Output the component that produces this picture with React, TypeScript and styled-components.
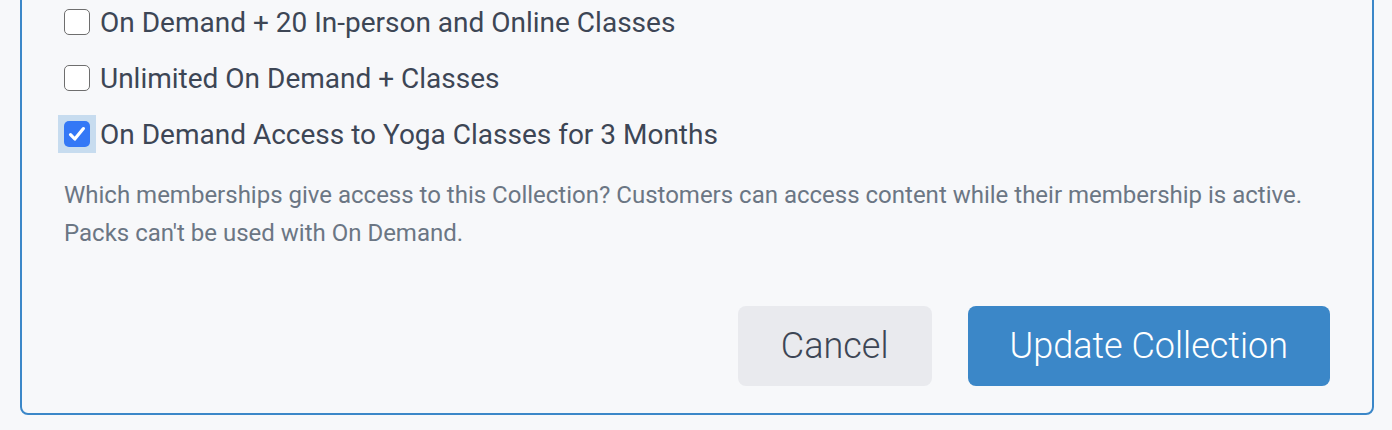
import React, { useState } from "react";
import styled, { createGlobalStyle } from "styled-components";

const GlobalStyle = createGlobalStyle`
  html, body {
    margin: 0;
    padding: 0;
    background: #f7f8fa;
    font-family: Roboto, "Liberation Sans", Arial, sans-serif;
    overflow: hidden;
  }
`;

const Page = styled.div`
  width: 1392px;
  height: 430px;
  overflow: hidden;
  background: #f7f8fa;
`;

const Card = styled.section`
  box-sizing: border-box;
  margin: -40px 0 0 20px;
  width: 1354px;
  border: 2px solid #3b87c8;
  border-radius: 8px;
  background: #f7f8fa;
  padding: 32px 42px 27px 36px;
  display: flex;
  flex-direction: column;
`;

const OptionList = styled.div`
  display: flex;
  flex-direction: column;
`;

const OptionRow = styled.label`
  display: flex;
  align-items: center;
  gap: 4px;
  height: 56px;
  cursor: pointer;
`;

const Focus = styled.span<{ $active: boolean }>`
  display: flex;
  padding: 6px;
  flex: none;
  background: ${(p) => (p.$active ? "#c7dcef" : "transparent")};
`;

const Box = styled.span<{ $checked: boolean }>`
  box-sizing: border-box;
  width: 26px;
  height: 26px;
  border-radius: 5px;
  display: flex;
  align-items: center;
  justify-content: center;
  background: ${(p) => (p.$checked ? "#3478f6" : "#ffffff")};
  border: ${(p) => (p.$checked ? "none" : "1.5px solid #6e6e6e")};
`;

const HiddenInput = styled.input`
  position: absolute;
  opacity: 0;
  width: 0;
  height: 0;
`;

const LabelText = styled.span`
  font-size: 28px;
  color: #3d4655;
  white-space: nowrap;
`;

const Help = styled.p`
  margin: 14px 0 0 6px;
  font-size: 24px;
  line-height: 38px;
  color: #6b7684;
`;

const Actions = styled.div`
  display: flex;
  justify-content: flex-end;
  gap: 36px;
  margin-top: 54px;
`;

const Button = styled.button<{ $primary?: boolean }>`
  height: 80px;
  padding: 0 ${(p) => (p.$primary ? "42px" : "43px")};
  border: none;
  border-radius: 8px;
  font-family: Roboto, "Liberation Sans", Arial, sans-serif;
  font-weight: 300;
  font-size: 36px;
  cursor: pointer;
  background: ${(p) => (p.$primary ? "#3b87c8" : "#e9eaee")};
  color: ${(p) => (p.$primary ? "#ffffff" : "#3d4655")};
`;

const Check = () => (
  <svg width="26" height="26" viewBox="0 0 26 26" fill="none">
    <path
      d="M6.5 13.6 L10.8 18 L19.4 7.6"
      stroke="#ffffff"
      strokeWidth="3.2"
      strokeLinecap="round"
      strokeLinejoin="round"
    />
  </svg>
);

const options = [
  "On Demand + 20 In-person and Online Classes",
  "Unlimited On Demand + Classes",
  "On Demand Access to Yoga Classes for 3 Months",
];

export default function App() {
  const [checked, setChecked] = useState<boolean[]>([false, false, true]);
  return (
    <Page>
      <GlobalStyle />
      <Card>
        <OptionList>
          {options.map((o, i) => (
            <OptionRow key={o}>
              <HiddenInput
                type="checkbox"
                checked={checked[i]}
                onChange={() =>
                  setChecked((c) => c.map((v, j) => (j === i ? !v : v)))
                }
              />
              <Focus $active={i === 2}>
                <Box $checked={checked[i]}>{checked[i] && <Check />}</Box>
              </Focus>
              <LabelText>{o}</LabelText>
            </OptionRow>
          ))}
        </OptionList>
        <Help>
          Which memberships give access to this Collection? Customers can access
          content while their membership is active.
          <br />
          Packs can't be used with On Demand.
        </Help>
        <Actions>
          <Button>Cancel</Button>
          <Button $primary>Update Collection</Button>
        </Actions>
      </Card>
    </Page>
  );
}
